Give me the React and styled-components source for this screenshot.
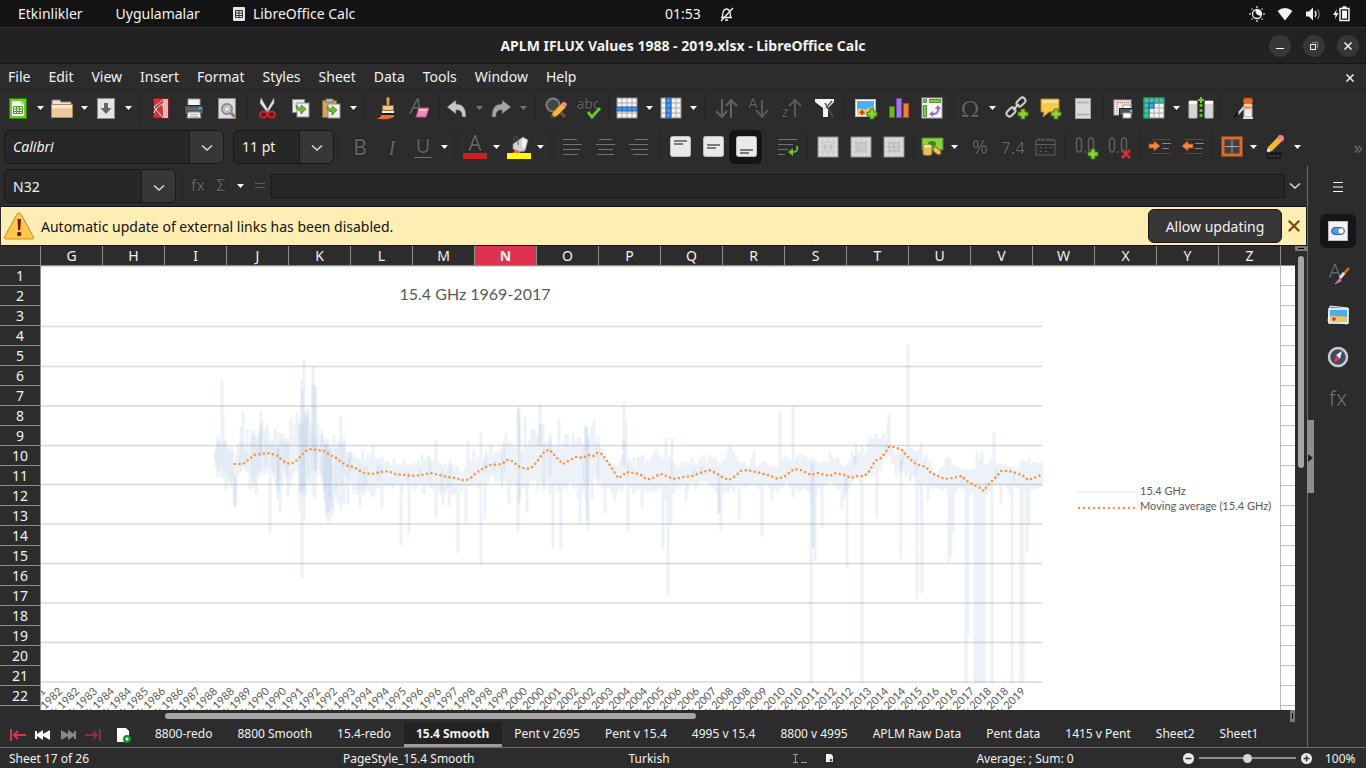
import { useState } from 'react'
import styled, { createGlobalStyle, css } from 'styled-components'

const GlobalStyle = createGlobalStyle`
  * { box-sizing: border-box; }
  body {
    margin: 0;
    background: #2c2c2c;
    color: #f2f2f2;
    font-family: 'Noto Sans', 'Open Sans', sans-serif;
    font-size: 14px;
  }
  button, input { font: inherit; color: inherit; }
  button { background: none; border: 0; padding: 0; }
  button svg { overflow: visible; }
`

/* ---------- icons, all drawn on a 24px board ---------- */

const Svg = ({ children, size = 24 }) => (
  <svg width={size} height={size} viewBox="0 0 24 24" fill="none" aria-hidden="true">{children}</svg>
)

const Plus = ({ x, y }) => (
  <path d={`M${x - 2} ${y - 5}h4v3h3v4h-3v3h-4v-3h-3v-4h3z`} fill="#8ad13a" stroke="#3c7a12" />
)

const Glyph = ({ children, size = 20, font = 'Noto Sans', italic, y = 19, x = 12 }) => (
  <text x={x} y={y} textAnchor="middle" fontSize={size} fontFamily={font} fontStyle={italic ? 'italic' : 'normal'} fill="#646464" stroke="#1f1f1f" strokeWidth="1.500" paintOrder="stroke">{children}</text>
)

const Table = ({ x = 2, y = 2, w = 20, h = 20, fill = '#f4f4f4', line = '#a9a9a9' }) => (
  <g>
    <rect x={x} y={y} width={w} height={h} fill={fill} stroke="#8b8b8b" />
    <path d={`M${x + 5} ${y}v${h}M${x + 10} ${y}v${h}M${x + 15} ${y}v${h}M${x} ${y + 5}h${w}M${x} ${y + 10}h${w}M${x} ${y + 15}h${w}`} stroke={line} />
  </g>
)

const icons = {
  newSheet: (
    <>
      <rect x="3.500" y="2.500" width="17" height="20" fill="#6ecb2b" stroke="#2f7f0b" />
      <path d="M6 5h9l3 3v12H6z" fill="#fff" />
      <path d="M15 5v3h3" stroke="#9ccf7c" />
      <path d="M7.500 10.500h9v7h-9zM7.500 13h9M7.500 15.500h9M10.500 10.500v7M13.500 10.500v7" stroke="#4c9a28" />
    </>
  ),
  open: (
    <>
      <path d="M2 4h8l1 2h10v12H2z" fill="#e4e4e4" stroke="#8a8a8a" />
      <path d="M1.500 8.500h21v13h-21z" fill="#ecca9c" stroke="#b08a58" />
      <path d="M2 9h20v3H2z" fill="#fbe9cf" />
    </>
  ),
  save: (
    <>
      <rect x="3.500" y="2.500" width="17" height="20" fill="#e4e4e4" stroke="#8d8d8d" />
      <path d="M10 7h4v5h3.500L12 18l-5.500-6H10z" fill="#62676b" />
    </>
  ),
  pdf: (
    <>
      <rect x="4.500" y="2.500" width="15" height="19.500" fill="#d5323a" stroke="#8d1a20" />
      <path d="M19 3h-3l-2 5 1 14h4z" fill="#d9bcbd" />
      <path d="M5 11l10-8M5 11l9 11M16 3l-2 5 1 14M5 17q2-6 9-9" stroke="#ececec" />
    </>
  ),
  print: (
    <>
      <rect x="6" y="3" width="12" height="8" fill="#f3f3f3" stroke="#999" />
      <rect x="2.500" y="9.500" width="19" height="9" rx="1" fill="#55585a" stroke="#242424" />
      <path d="M3 13h18" stroke="#777" />
      <rect x="17" y="11" width="2" height="2" fill="#33c5ff" />
      <path d="M6 16h12l1 6H5z" fill="#f3f3f3" stroke="#888" />
      <path d="M8 18.500h8M8 20.500h8" stroke="#b5b5b5" />
    </>
  ),
  preview: (
    <>
      <rect x="3.500" y="2.500" width="17" height="20" fill="#dcdcdc" stroke="#8d8d8d" />
      <circle cx="12" cy="13" r="5" fill="#c8d2da" stroke="#888" strokeWidth="2" />
      <circle cx="12" cy="13" r="2.500" fill="#e8eef2" stroke="#a5a5a5" />
      <path d="M16 17l4 4" stroke="#9a7b62" strokeWidth="3" />
    </>
  ),
  cut: (
    <>
      <path d="M5 2l7 12-1 2L4 7zM18 2l-7 12 1 2 6-9z" fill="#e8e8e8" stroke="#999" strokeWidth=".5" />
      <ellipse cx="7.500" cy="18.500" rx="3.500" ry="3" stroke="#d3202c" strokeWidth="2" />
      <ellipse cx="15.500" cy="18.500" rx="3.500" ry="3" stroke="#d3202c" strokeWidth="2" />
    </>
  ),
  copy: (
    <>
      <rect x="3.500" y="3.500" width="12" height="13" fill="#e8e8e8" stroke="#8d8d8d" />
      <rect x="8" y="7" width="12" height="14" fill="#f0f0f0" stroke="#8d8d8d" />
      <path d="M7 9c0 4 2 6 5 6v3l5-5-5-4v3c-2 0-3-1-5-3z" fill="#73b93a" stroke="#3f7d17" strokeWidth=".7" />
    </>
  ),
  paste: (
    <>
      <rect x="3.500" y="4.500" width="14" height="17" fill="#d5a15c" stroke="#8a6430" />
      <rect x="7" y="3" width="7" height="3" fill="#c9c9c9" stroke="#777" />
      <rect x="9" y="8" width="12" height="14" fill="#f0f0f0" stroke="#8d8d8d" />
      <path d="M8 10c0 4 2 6 5 6v3l5-5-5-4v3c-2 0-3-1-5-3z" fill="#73b93a" stroke="#3f7d17" strokeWidth=".7" />
    </>
  ),
  brush: (
    <>
      <path d="M12.500 2a1.800 1.800 0 0 1 3 0l-.5 8h-2z" fill="#e2b073" stroke="#8f6533" strokeWidth=".6" />
      <rect x="8.500" y="9.500" width="11" height="5" fill="#efc78c" stroke="#8f6533" strokeWidth=".8" />
      <path d="M8 15h12v2H8z" fill="#eee" />
      <path d="M8 18h12v3c-6 3-10 2-18 2 3-1 5-2 6-5z" fill="#e8702a" />
      <path d="M8 17h12v2H8z" fill="#1d1d1d" />
    </>
  ),
  clear: (
    <>
      <Glyph size={21} x={9} y={18} italic>A</Glyph>
      <path d="M12 12h10l-3 9H9z" fill="#f38bb5" stroke="#c04e80" />
      <path d="M12 13h9l-1 2h-9z" fill="#fbc0d7" />
    </>
  ),
  undo: <path d="M2 11l9-7v4c7 0 10 4 10 13h-4c0-5-1-7-6-7v4z" fill="#c8c8c8" stroke="#4d4d4d" strokeWidth=".6" />,
  redo: <path d="M22 11l-9-7v4c-7 0-10 4-10 13h4c0-5 1-7 6-7v4z" fill="#a5a5a5" stroke="#4d4d4d" strokeWidth=".6" />,
  find: (
    <>
      <circle cx="9" cy="9" r="6.500" fill="#454545" stroke="#808080" strokeWidth="2" />
      <path d="M14 14l7 7" stroke="#6e5548" strokeWidth="3" />
      <path d="M7 22l2-6 9-9 4 4-9 9z" fill="#f4b832" stroke="#986711" strokeWidth=".8" />
      <path d="M17 8l2-2h2l2 2v1l-2 2z" fill="#ee7fa0" />
      <path d="M7 22l1-3 2 2z" fill="#333" />
    </>
  ),
  spell: (
    <>
      <Glyph size={14} x={11} y={13}>abc</Glyph>
      <path d="M11 16l4 5 8-9" stroke="#67c52a" strokeWidth="3" />
    </>
  ),
  row: (
    <>
      <Table />
      <rect x="2" y="11" width="20" height="4" fill="#4b97e8" stroke="#1c5fb0" />
      <path d="M7 11v4M12 11v4M17 11v4" stroke="#1c5fb0" />
    </>
  ),
  column: (
    <>
      <Table />
      <rect x="7" y="2" width="5" height="20" fill="#4b97e8" stroke="#1c5fb0" />
      <path d="M7 7h5M7 12h5M7 17h5" stroke="#1c5fb0" />
    </>
  ),
  sort: <path d="M8 3v18M2 15l6 6 5-6M17 22V4M12 10l5-6 6 6" stroke="#626262" strokeWidth="2" />,
  sortAsc: (
    <>
      <Glyph size={14} x={6} y={12}>A</Glyph>
      <path d="M15 4v17M9 14l6 7 6-7" stroke="#585858" strokeWidth="2" />
    </>
  ),
  sortDesc: (
    <>
      <Glyph size={14} x={5} y={21}>z</Glyph>
      <path d="M15 21V4M9 10l6-6 6 6" stroke="#585858" strokeWidth="2" />
    </>
  ),
  filter: (
    <>
      <path d="M2 3h19v3l-6 6v9h-5v-9L2 6z" fill="#f3f3f3" />
      <path d="M12 7l8 14M19 5l-6 7" stroke="#555" strokeWidth="1.500" />
    </>
  ),
  image: (
    <>
      <rect x="1.500" y="3.500" width="20" height="17" fill="#fff" stroke="#bbb" />
      <rect x="3" y="5" width="17" height="14" fill="#4ab2ee" />
      <path d="M3 14c4-3 6 1 10-1s5-1 7 0v6H3z" fill="#f6cb72" />
      <path d="M8 14v5M5.500 16.500h5" stroke="#d43b1c" strokeWidth="2" />
      <Plus x={18} y={18} />
    </>
  ),
  chart: (
    <>
      <rect x="2.500" y="10.500" width="5" height="11" fill="#66bb2e" stroke="#3b8010" />
      <rect x="9.500" y="2.500" width="5" height="19" fill="#a577dc" stroke="#7443b4" />
      <rect x="16.500" y="7.500" width="5" height="14" fill="#f0813c" stroke="#b8501a" />
    </>
  ),
  pivot: (
    <>
      <rect x="2" y="2" width="20" height="20" fill="#f7f7f7" stroke="#aaa" />
      <path d="M3.500 3.500h3v3h-3zM9.500 3.500h11v3h-11zM3.500 9.500h3v11h-3z" fill="#7ec850" stroke="#4a9723" />
      <path d="M18 9l-3 4h2c0 3-1 4-4 4v-2l-4 3 4 3v-2c4 0 6-2 6-6h2z" fill="#9a6bd8" />
    </>
  ),
  omega: <Glyph size={23} y={21} font="DejaVu Serif">Ω</Glyph>,
  link: (
    <>
      <g stroke="#cfcfcf" strokeWidth="2">
        <rect x="13" y="1" width="6" height="10" rx="3" transform="rotate(45 16 6)" />
        <rect x="3" y="11" width="6" height="10" rx="3" transform="rotate(45 6 16)" />
        <path d="M8 14l6-6" />
      </g>
      <Plus x={18} y={18} />
    </>
  ),
  comment: (
    <>
      <path d="M3 3h18v13H11l-6 5 1-5H3z" fill="#f8ca4c" stroke="#b98a1b" />
      <path d="M4 4h16v3H4z" fill="#fde08a" />
      <Plus x={18} y={18} />
    </>
  ),
  headers: (
    <>
      <rect x="4.500" y="2.500" width="15" height="20" fill="#dadada" stroke="#a5a5a5" />
      <path d="M6 6.500h12M6 18.500h12" stroke="#b3b3b3" strokeWidth="2" />
    </>
  ),
  printArea: (
    <>
      <rect x="2" y="4" width="17" height="15" fill="#ececec" stroke="#aaa" />
      <path d="M4 6.500h13M5 6v12" stroke="#d66" strokeDasharray="1 1" />
      <rect x="11" y="9" width="8" height="4" fill="#fff" stroke="#999" />
      <rect x="7.500" y="12.500" width="14" height="7" fill="#505355" stroke="#222" />
      <rect x="11" y="17" width="8" height="5" fill="#fff" stroke="#999" />
      <rect x="18" y="14" width="2" height="2" fill="#33c5ff" />
    </>
  ),
  freeze: (
    <>
      <Table />
      <path d="M2 2h20v5H7v15H2z" fill="#45c2a0" stroke="#1e8d70" />
      <path d="M7 2v20M12 2v5M17 2v5M2 7h5M2 12h5M2 17h5" stroke="#1e8d70" />
      <rect x="7" y="7" width="5" height="5" fill="#4b97e8" stroke="#1c5fb0" />
    </>
  ),
  split: (
    <>
      <path d="M0 5h8v17H0zM16 5h8v17h-8z" fill="#d5d5d5" stroke="#bdbdbd" />
      <path d="M0 6.500h8M16 6.500h8" stroke="#fff" strokeWidth="3" />
      <path d="M12 8v15" stroke="#5cb828" strokeWidth="3" strokeDasharray="3 2" />
      <path d="M12 1v6M9 4h6" stroke="#6ccb32" strokeWidth="2" />
    </>
  ),
  draw: (
    <>
      <path d="M14 2h8l1 4-2 2h-6l-2-2z" fill="#e8692a" stroke="#a0410e" strokeWidth=".7" />
      <path d="M14 8h8v13h-8z" fill="#eee" stroke="#aaa" />
      <path d="M14 10h8v3h-8z" fill="#f19a63" />
      <path d="M13 21h10v2H13z" fill="#ddd" />
      <path d="M14 11l-6 7" stroke="#ddd" strokeWidth="2" />
      <path d="M9 16l-2 4-4 2 3-5z" fill="#111" />
    </>
  ),
  bold: <Glyph size={21} x={13} y={20}>B</Glyph>,
  italic: <Glyph size={22} y={20} font="Liberation Serif" italic>I</Glyph>,
  underline: (
    <>
      <Glyph size={20} x={13} y={18}>U</Glyph>
      <path d="M4 22.500h18" stroke="#707070" />
    </>
  ),
  fontColor: (
    <>
      <Glyph size={21} x={13} y={16}>A</Glyph>
      <path d="M1 18h24v6H1z" fill="#c9211e" />
    </>
  ),
  fill: (
    <>
      <path d="M7 9l10-7 5 3-3 11-7 1-5-3z" fill="#cfd2d5" stroke="#8a8a8a" strokeWidth=".7" />
      <path d="M16 3l5 2-2 9-3-2z" fill="#f3f3f3" />
      <path d="M12 10V3c-2-3-5-1-4 3" stroke="#5f5f5f" />
      <path d="M8 14l3 1 4 3H6c3-1 3-2 2-4z" fill="#ee6b2c" />
      <path d="M1 18h24v6H1z" fill="#ff0" />
    </>
  ),
  left: <path d="M2 4.500h14M2 9.500h19M2 14.500h17M2 19.500h15" stroke="#747474" />,
  center: <path d="M5 4.500h13M2 9.500h19M4 14.500h15M3 19.500h17" stroke="#747474" />,
  right: <path d="M8 4.500h13M2 9.500h19M4 14.500h17M6 19.500h15" stroke="#747474" />,
  top: (
    <>
      <rect x="2.500" y="1.500" width="20" height="20" rx="2" fill="#e9e9e9" stroke="#bdbdbd" />
      <path d="M6 6h13M6 9h9" stroke="#555" strokeWidth="1.500" />
    </>
  ),
  middle: (
    <>
      <rect x="2.500" y="1.500" width="20" height="20" rx="2" fill="#e9e9e9" stroke="#bdbdbd" />
      <path d="M6 10h13M6 13h9" stroke="#555" strokeWidth="1.500" />
    </>
  ),
  bottom: (
    <>
      <rect x="2.500" y="1.500" width="20" height="20" rx="2" fill="#e9e9e9" stroke="#bdbdbd" />
      <path d="M6 15h13M6 18h9" stroke="#555" strokeWidth="1.500" />
    </>
  ),
  wrap: (
    <>
      <path d="M3 4.500h19M3 9.500h15M3 14.500h10M3 19.500h7" stroke="#747474" />
      <path d="M23 11c1 4-1 7-5 7v3l-5-4 5-4v3c3 0 4-2 3-5z" fill="#73b93a" />
    </>
  ),
  merge: (
    <>
      <Table fill="#dcdcdc" line="#c6c6c6" />
      <path d="M5 8h14v8H5z" fill="#d4d4d4" />
      <path d="M10 9l-3 3 3 3zM14 9l3 3-3 3z" fill="#bcbcbc" />
    </>
  ),
  mergeCells: (
    <>
      <Table fill="#dcdcdc" line="#c6c6c6" />
      <path d="M7 8h10v8H7z" fill="#cacaca" stroke="#bbb" />
    </>
  ),
  unmerge: (
    <>
      <Table fill="#dcdcdc" line="#c6c6c6" />
      <path d="M7 8h10v8H7zM12 8v8M7 12h10" stroke="#b3b3b3" fill="#d2d2d2" />
    </>
  ),
  currency: (
    <>
      <path d="M2 3h21v12H2z" fill="#8cd04a" stroke="#4a9116" />
      <ellipse cx="12" cy="9" rx="4" ry="3" fill="#3e8a12" />
      <path d="M3 11c0-2 9-2 9 0v8c0 2-9 2-9 0z" fill="#e4bf62" stroke="#8f6c1e" />
      <ellipse cx="7.500" cy="11" rx="4" ry="1.500" fill="#f8e2a2" />
      <ellipse cx="17" cy="16" rx="4.500" ry="2.500" transform="rotate(40 17 16)" fill="#e9c56b" stroke="#8f6c1e" />
    </>
  ),
  percent: <Glyph size={19} x={13} y={19}>%</Glyph>,
  number: <Glyph size={17} x={13} y={19}>7.4</Glyph>,
  date: (
    <>
      <path d="M3 5h19v15H3zM3 9.500h19M6 3v3M10 3v3M15 3v3M19 3v3" stroke="#606060" />
      <path d="M7 12.500h12M7 16.500h9" stroke="#606060" strokeDasharray="2 3" />
    </>
  ),
  addDecimal: (
    <>
      <path d="M2.500 7q0-4 2.500-4t2.500 4v6q0 4-2.500 4t-2.500-4zM14.500 7q0-4 2.500-4t2.500 4v6q0 4-2.500 4t-2.500-4zM10 17h2" stroke="#606060" strokeWidth="1.500" />
      <Plus x={19} y={19} />
    </>
  ),
  delDecimal: (
    <>
      <path d="M2.500 7q0-4 2.500-4t2.500 4v6q0 4-2.500 4t-2.500-4zM14.500 7q0-4 2.500-4t2.500 4v6q0 4-2.500 4t-2.500-4zM10 17h2" stroke="#606060" strokeWidth="1.500" />
      <path d="M15 15l8 8M23 15l-8 8" stroke="#d22f35" strokeWidth="2.500" />
    </>
  ),
  indent: (
    <>
      <path d="M14 8.500h9M14 13.500h7" stroke="#888" />
      <path d="M4 4.500h18M4 18.500h18" stroke="#4a4a4a" />
      <path d="M1 9h5V6l6 5-6 5v-3H1z" fill="#f08a45" stroke="#b34c10" strokeWidth=".8" />
    </>
  ),
  outdent: (
    <>
      <path d="M14 8.500h9M14 13.500h7" stroke="#888" />
      <path d="M4 4.500h18M4 18.500h18" stroke="#4a4a4a" />
      <path d="M12 9H7V6l-6 5 6 5v-3h5z" fill="#f08a45" stroke="#b34c10" strokeWidth=".8" />
    </>
  ),
  border: (
    <>
      <rect x="4" y="3" width="18" height="17" fill="#404040" stroke="#e4682a" strokeWidth="3" />
      <path d="M13 5v13M6 11.500h14" stroke="#aaa" />
    </>
  ),
  pencil: (
    <>
      <path d="M3 20q8-3 16 0M4 23h14M8 18h10" stroke="#101010" strokeWidth="1.500" strokeDasharray="3 1" />
      <path d="M4 17l1-5L15 2l4 4L9 16z" fill="#f4b832" stroke="#986711" strokeWidth=".8" />
      <path d="M14 3l2-3h3l2 2v2l-2 3z" fill="#ee7fa0" />
      <path d="M4 17l1-4 3 3z" fill="#fff" />
    </>
  ),
  props: (
    <>
      <rect x="2.500" y="2.500" width="19" height="19" fill="#f3f3f3" stroke="#bbb" />
      <rect x="5.500" y="8.500" width="13" height="7" rx="3.500" fill="#4b97e8" stroke="#2669b8" />
      <circle cx="15" cy="12" r="3" fill="#fff" stroke="#999" />
    </>
  ),
  styles: (
    <>
      <Glyph size={20} x={9} y={17}>A</Glyph>
      <path d="M23 7l-8 9" stroke="#c9792d" strokeWidth="2.500" />
      <path d="M18 12l-4 5" stroke="#ddd" strokeWidth="3" />
      <path d="M14 17l-5 6 6-3z" fill="#e06cbc" stroke="#e06cbc" />
    </>
  ),
  gallery: (
    <>
      <path d="M4 3l18 2-1 16-19-3z" fill="#3f9cc7" stroke="#eee" />
      <rect x="3" y="6" width="19" height="14" fill="#49aeea" stroke="#fff" strokeWidth="1.500" />
      <path d="M4 14c5-3 6 1 11-1l6 1v5H4z" fill="#f3c263" />
      <path d="M8 14v4M6 16h4" stroke="#d43b1c" strokeWidth="1.500" />
    </>
  ),
  navigator: (
    <>
      <circle cx="12" cy="12" r="9" fill="#3d4c66" stroke="#cdcdcd" strokeWidth="2.500" />
      <path d="M16 6l-2 8-4-4z" fill="#f1f1f1" />
      <path d="M8 18l2-8 4 4z" fill="#e03a3a" />
    </>
  ),
  functions: <Glyph size={21} y={19}>fx</Glyph>,
}

const Icon = ({ name, size }) => <Svg size={size}>{icons[name]}</Svg>

const Chevron = () => (
  <svg width="12" height="8" viewBox="0 0 12 8" fill="none" aria-hidden="true"><path d="M1 1.500l5 4.500 5-4.500" stroke="#ddd" strokeWidth="1.500" /></svg>
)

const Cross = ({ size = 8, color = '#f2f2f2', width = 2 }) => (
  <svg width={size} height={size} viewBox="0 0 8 8" aria-hidden="true"><path d="M.5.5l7 7M7.500.5l-7 7" stroke={color} strokeWidth={width} /></svg>
)

/* ---------- desktop bar and window title ---------- */

const Screen = styled.div`
  display: flex;
  flex-direction: column;
  height: 100vh;
  overflow: hidden;
`

const TopBar = styled.header`
  display: grid;
  grid-template-columns: 1fr auto 1fr;
  align-items: center;
  height: 27px;
  flex: none;
  background: #131313;
`

const TopGroup = styled.div`
  display: flex;
  align-items: center;
  gap: 33px;
  padding: 0 18px;
`

const AppButton = styled.button`
  display: flex;
  align-items: center;
  gap: 8px;
`

const TrayGroup = styled.div`
  display: flex;
  align-items: center;
  justify-content: space-between;
  padding: 0 16px 0 16px;
`

const Tray = styled.div`
  display: flex;
  gap: 10px;
`

const TitleBar = styled.div`
  display: grid;
  grid-template-columns: 1fr auto 1fr;
  align-items: center;
  height: 37px;
  flex: none;
  background: #222;
  border-top: 1px solid #353535;
  border-bottom: 1px solid #171717;
`

const Title = styled.h1`
  margin: 0;
  font-size: 14px;
  font-weight: 700;
`

const WindowButtons = styled.div`
  display: flex;
  justify-content: flex-end;
  gap: 12px;
  padding-right: 7px;
`

const RoundButton = styled.button`
  display: flex;
  align-items: center;
  justify-content: center;
  width: 22px;
  height: 22px;
  border-radius: 50%;
  background: #373737;
`

const MenuBar = styled.nav`
  display: flex;
  align-items: center;
  height: 25px;
  flex: none;
  gap: 18px;
  padding: 0 12px 0 8px;
  border-bottom: 1px solid #272727;

  > :last-child { margin-left: auto; }
`

/* ---------- toolbars ---------- */

const Toolbar = styled.div`
  display: flex;
  align-items: center;
  height: ${({ $height }) => $height}px;
  flex: none;
  padding-left: 4px;
`

const ToolButton = styled.button`
  display: flex;
  align-items: center;
  justify-content: center;
  flex: none;
  width: ${({ $narrow }) => ($narrow ? 28 : 33)}px;
  height: 34px;
  border-radius: 6px;
  ${({ $active }) => $active && css`background: #141414;`}
`

const CaretButton = styled.button`
  display: flex;
  align-items: center;
  justify-content: center;
  flex: none;
  width: 16px;
  height: 34px;
  opacity: ${({ $dim }) => ($dim ? 0.35 : 1)};
`

const Separator = styled.span`
  flex: none;
  width: 2px;
  height: 32px;
  margin: 0 3px;
  background: #282828;
`

const Overflow = styled.button`
  margin-left: auto;
  width: 16px;
  color: #6c6c6c;
  font-size: 18px;
`

const Combo = styled.div`
  display: flex;
  flex: none;
  width: ${({ $width }) => $width}px;
  height: 34px;
  margin-right: ${({ $after }) => $after}px;
  border: 1px solid #181818;
  border-radius: 6px;
  background: #272727;
  overflow: hidden;

  input {
    flex: 1;
    min-width: 0;
    padding: 0 8px;
    border: 0;
    background: none;
    outline: 0;
    font-style: ${({ $italic }) => ($italic ? 'italic' : 'normal')};
  }

  button {
    width: 34px;
    border-left: 1px solid #181818;
    background: #373737;
  }
`

const FormulaBar = styled.div`
  display: flex;
  align-items: center;
  height: 40px;
  flex: none;
  padding: 0 2px 0 4px;
`

const FormulaInput = styled.input`
  flex: 1;
  min-width: 0;
  height: 24px;
  border: 1px solid #181818;
  background: #272727;
  outline: 0;
`

const FormulaButton = styled.button`
  display: flex;
  align-items: center;
  justify-content: center;
  width: ${({ $narrow }) => ($narrow ? 20 : 23)}px;
  height: 34px;
`

const Caret = ({ dim, label }) => (
  <CaretButton $dim={dim} aria-label={label}>
    <svg width="7" height="4" viewBox="0 0 7 4" aria-hidden="true"><path d="M0 0h7L3.500 4z" fill="#fff" /></svg>
  </CaretButton>
)

const standardTools = [
  'newSheet+', 'open+', 'save+', '|', 'pdf', 'print', 'preview', '|', 'cut', 'copy', 'paste+', '|',
  'brush', 'clear', '|', 'undo-', 'redo-', '|', 'find', 'spell', '|', 'row+', 'column+', '|',
  'sort', 'sortAsc', 'sortDesc', 'filter', '|', 'image', 'chart', 'pivot', '|', 'omega+', 'link', 'comment', 'headers', '|',
  'printArea', 'freeze+', 'split', '|', 'draw',
]

const formatTools = [
  '|', 'bold', 'italic', 'underline+', '|', 'fontColor+', 'fill+', '|', 'left', 'center', 'right', '|',
  'top', 'middle', 'bottom*', '|', 'wrap', '|', 'merge', 'mergeCells', 'unmerge', '|',
  'currency+', 'percent', 'number', 'date', '|', 'addDecimal', 'delDecimal', '|', 'indent', 'outdent', '|', 'border+', 'pencil+',
]

// "+" has a drop-down, "-" has a disabled one, "*" is pressed
function Tools({ items }) {
  return items.map((item, i) => {
    if (item === '|') return <Separator key={i} />
    const name = item.replace(/[+*-]$/, '')
    const drop = /[+-]$/.test(item)
    return [
      <ToolButton key={name} $narrow={drop} $active={item.endsWith('*')} aria-label={name}><Icon name={name} /></ToolButton>,
      drop && <Caret key={name + 'Menu'} dim={item.endsWith('-')} label={name + ' options'} />,
    ]
  })
}

/* ---------- work area ---------- */

const Body = styled.div`
  display: flex;
  flex: 1;
  min-height: 0;
  border-bottom: 1px solid #6e6e6e;
`

const Work = styled.main`
  display: flex;
  flex-direction: column;
  flex: 1;
  min-width: 0;
`

const InfoBar = styled.div`
  display: flex;
  align-items: center;
  height: 40px;
  flex: none;
  gap: 6px;
  margin-left: 1px;
  padding: 0 6px 0 2px;
  border: 1px solid #151515;
  border-left: 0;
  background: #ffeeb3;
  color: #111;

  p { flex: 1; margin: 0; }
`

const AllowButton = styled.button`
  height: 34px;
  width: 134px;
  border: 1px solid #181818;
  border-radius: 6px;
  background: #373737;
  color: #f2f2f2;
`

const SheetArea = styled.div`
  display: flex;
  flex: 1;
  min-height: 0;
`

const SheetView = styled.div`
  position: relative;
  flex: 1;
  min-width: 0;
  overflow: hidden;
`

const Cells = styled.table`
  width: 100%;
  table-layout: fixed;
  border-spacing: 0;

  th, td { height: 20px; padding: 0; line-height: 18px; }
  th {
    background: #2c2c2c;
    border-right: 1px solid #8e8e8e;
    border-bottom: 1px solid #8e8e8e;
    font-weight: 400;
  }
  td {
    background: #fff;
    border-right: 1px solid #c0c0c0;
    border-bottom: 1px solid #c0c0c0;
  }
  th.current { background: #dc3450; font-weight: 700; }
  th:last-child, td:last-child { border-right: 0; }
`

// the chart object floats over the cells
const ChartFrame = styled.div`
  position: absolute;
  left: 41px;
  top: 20px;
  width: 1240px;
  height: 100%;
  background: #fff;
  border-right: 1px solid #b9b9b9;
`

const VScroll = styled.div`
  display: flex;
  flex-direction: column;
  align-items: center;
  gap: 5px;
  width: 12px;
`

const VSplit = styled.span`
  width: 100%;
  height: 5px;
  border: solid #7a7a7a;
  border-width: 2px 3px;
  background: #000;
`

const VThumb = styled.span`
  width: 6px;
  height: 212px;
  border-radius: 3px;
  background: #a6a6a6;
`

const HScroll = styled.div`
  display: flex;
  align-items: center;
  justify-content: space-between;
  height: 12px;
  flex: none;
  padding: 0 12px 0 165px;
`

const HThumb = styled.span`
  width: 531px;
  height: 6px;
  border-radius: 3px;
  background: #a6a6a6;
`

const HSplit = styled.span`
  width: 5px;
  height: 12px;
  border: solid #7a7a7a;
  border-width: 3px 2px;
  background: #000;
`

const TabStrip = styled.div`
  display: flex;
  height: 25px;
  flex: none;
`

const TabNav = styled.div`
  display: flex;
  align-items: center;
  gap: 9px;
  width: 143px;
  padding-left: 10px;
  flex: none;

  button { display: flex; }
  button:last-child { margin-left: 6px; }
`

const Tab = styled.button`
  padding: 0 13px 0 12px;
  font-size: 12px;
  white-space: nowrap;
  border-bottom: 3px solid ${({ $active }) => ($active ? '#9a9a9a' : 'transparent')};
  background: ${({ $active }) => ($active ? '#222' : 'none')};
  font-weight: ${({ $active }) => ($active ? 700 : 400)};
`

const Sidebar = styled.aside`
  position: relative;
  display: flex;
  flex-direction: column;
  align-items: center;
  gap: 8px;
  width: 59px;
  padding: 4px 0 0 2px;
  border-left: 1px solid #6e6e6e;
`

const SideButton = styled.button`
  display: flex;
  align-items: center;
  justify-content: center;
  width: 36px;
  height: 34px;
  border-radius: 6px;
  background: ${({ $active }) => ($active ? '#161616' : 'none')};

  &:first-child { margin-bottom: 2px; }
`

const SideHandle = styled.button`
  position: absolute;
  left: -1px;
  top: 254px;
  width: 7px;
  height: 73px;
  background: #8e8e8e;
`

const StatusBar = styled.footer`
  display: grid;
  grid-template-columns: 176px 158px 180px 1fr 32px 60px 298px 192px;
  align-items: center;
  height: 20px;
  flex: none;
  font-size: 12px;
`

const StatusCell = styled.span`
  display: flex;
  justify-content: ${({ $center }) => ($center ? 'center' : 'flex-start')};
  padding-left: ${({ $center }) => ($center ? 0 : 9)}px;
`

const ZoomBox = styled.div`
  display: flex;
  align-items: center;
  gap: 5px;
  padding-left: 9px;

  button { display: flex; }
  output { margin-left: 8px; }
`

const ZoomRange = styled.input`
  appearance: none;
  width: 97px;
  height: 12px;
  margin: 0;
  background: linear-gradient(#8e8e8e, #8e8e8e) center / 100% 2px no-repeat;

  &::-webkit-slider-thumb {
    appearance: none;
    width: 9px;
    height: 9px;
    border-radius: 50%;
    background: #d6d6d6;
  }
`

/* ---------- chart ---------- */

const gridLines = [60.5, 100.5, 140, 179.5, 218.5, 258, 297.5, 337, 376.5, 416]

// x, top and bottom of the dense part of the signal
const band = [
  [216, 450, 466], [221, 440, 472], [225, 444, 478], [231, 450, 483], [235, 470, 492], [239, 453, 470], [246, 448, 465],
  [254, 440, 484], [262, 434, 470], [270, 442, 460], [277, 444, 486], [284, 444, 470], [289, 446, 488], [297, 430, 462],
  [303, 420, 492], [310, 424, 480], [318, 438, 460], [325, 442, 492], [332, 446, 502], [342, 450, 478], [350, 456, 482],
  [362, 462, 490], [380, 463, 486], [395, 467, 482], [410, 468, 482], [425, 464, 483], [435, 466, 488], [450, 470, 492],
  [460, 476, 488], [470, 466, 482], [480, 462, 478], [492, 457, 474], [508, 448, 478], [520, 452, 484], [530, 448, 480],
  [540, 436, 472], [548, 446, 480], [560, 450, 484], [575, 446, 480], [585, 444, 482], [598, 444, 476], [606, 462, 486],
  [616, 468, 488], [625, 458, 480], [634, 466, 488], [645, 468, 484], [656, 462, 486], [668, 466, 488], [680, 468, 484],
  [695, 466, 480], [708, 464, 480], [720, 468, 494], [730, 456, 484], [745, 468, 484], [762, 468, 482], [775, 472, 486],
  [785, 459, 480], [797, 464, 484], [811, 462, 490], [822, 466, 484], [832, 462, 480], [845, 468, 490], [856, 456, 474],
  [866, 456, 474], [872, 444, 468], [884, 440, 458], [890, 444, 454], [896, 458, 468], [904, 450, 468], [914, 452, 474],
  [924, 462, 482], [936, 476, 486], [948, 466, 486], [958, 470, 482], [970, 472, 492], [985, 466, 494], [992, 464, 484],
  [1002, 466, 482], [1015, 470, 486], [1024, 466, 486], [1032, 466, 488], [1042, 464, 485],
]

// x, top, bottom
const spikes = [
  [222, 381, 460], [223, 413, 470], [235, 470, 506], [241, 428, 460], [243, 413, 450], [247, 430, 460], [256, 450, 493],
  [261, 412, 460], [262, 420, 470], [267, 426, 455], [270, 450, 533], [275, 430, 470], [278, 450, 499], [280, 433, 511],
  [284, 435, 470], [288, 450, 496], [291, 419, 460], [295, 426, 460], [297, 413, 460], [300, 422, 509], [302, 380, 577],
  [304, 361, 519], [308, 409, 450], [313, 368, 494], [315, 386, 498], [318, 428, 460], [326, 440, 514], [328, 441, 521],
  [330, 450, 520], [333, 447, 514], [341, 417, 509], [344, 445, 502], [348, 460, 503], [360, 470, 505], [363, 450, 480],
  [373, 446, 480], [382, 460, 507], [401, 470, 544], [409, 470, 533], [422, 456, 480], [423, 470, 493], [436, 441, 517],
  [443, 470, 504], [449, 470, 505], [458, 469, 552], [466, 470, 523], [468, 442, 480], [474, 451, 470], [481, 433, 564],
  [485, 460, 518], [491, 446, 470], [504, 444, 470], [509, 442, 503], [518, 450, 532], [519, 408, 500], [525, 417, 470],
  [527, 450, 511], [534, 431, 470], [540, 405, 480], [543, 426, 470], [550, 450, 493], [553, 460, 547], [559, 420, 470],
  [561, 460, 549], [565, 437, 470], [573, 434, 470], [580, 450, 522], [586, 426, 500], [588, 450, 529], [594, 421, 460],
  [598, 437, 470], [605, 460, 512], [615, 470, 500], [624, 403, 450], [626, 423, 470], [628, 460, 530], [642, 470, 507],
  [643, 456, 480], [656, 450, 490], [663, 460, 548], [666, 439, 500], [668, 470, 594], [671, 460, 523], [672, 439, 480],
  [686, 470, 499], [700, 459, 480], [719, 470, 513], [721, 470, 529], [729, 454, 490], [733, 454, 480], [739, 470, 518],
  [754, 452, 480], [762, 466, 535], [772, 470, 500], [780, 413, 480], [793, 407, 496], [811, 460, 682], [813, 462, 547],
  [815, 460, 560], [822, 470, 527], [830, 453, 480], [842, 470, 508], [847, 470, 566], [856, 444, 470], [862, 446, 682],
  [870, 438, 460], [877, 444, 517], [888, 426, 450], [889, 415, 450], [901, 455, 558], [908, 345, 470], [917, 460, 598],
  [919, 454, 480], [921, 445, 518], [922, 480, 592], [928, 470, 499], [947, 459, 480], [949, 470, 561], [951, 470, 555],
  [953, 470, 530], [966, 470, 682], [968, 480, 634], [975, 470, 682], [977, 452, 682], [980, 460, 682], [982, 453, 682],
  [984, 470, 682], [992, 460, 682], [994, 433, 480], [1001, 470, 502], [1010, 470, 493], [1012, 470, 682], [1021, 462, 682],
  [1023, 462, 682], [1027, 470, 551], [1029, 460, 523],
]

const average = [
  [235, 464], [243, 464], [247, 461], [254, 455], [262, 454], [267, 453], [272, 454], [278, 456], [282, 460], [286, 463],
  [290, 464], [295, 462], [301, 456], [306, 451], [311, 449], [318, 450], [324, 451], [330, 455], [335, 457], [341, 462],
  [348, 466], [354, 467], [360, 471], [364, 473], [372, 474], [380, 472], [388, 471], [395, 474], [405, 475], [415, 476],
  [422, 475], [430, 473], [440, 475], [447, 477], [455, 478], [461, 480], [467, 480], [472, 477], [476, 473], [482, 469],
  [490, 465], [502, 464], [507, 460], [512, 461], [518, 466], [526, 469], [531, 468], [536, 463], [541, 456], [545, 451],
  [550, 450], [556, 457], [563, 464], [570, 460], [576, 457], [583, 458], [588, 455], [594, 456], [597, 453], [602, 454],
  [609, 464], [613, 470], [618, 478], [622, 476], [626, 472], [635, 473], [641, 475], [646, 479], [651, 479], [658, 475],
  [663, 474], [668, 477], [675, 479], [683, 477], [692, 476], [700, 473], [709, 470], [716, 473], [722, 477], [729, 480],
  [734, 477], [741, 471], [747, 470], [756, 472], [764, 474], [771, 476], [778, 479], [785, 476], [794, 469], [801, 470],
  [811, 475], [818, 473], [825, 475], [830, 476], [836, 473], [844, 475], [851, 478], [857, 476], [864, 476], [868, 473],
  [871, 468], [875, 461], [881, 458], [885, 453], [889, 447], [894, 447], [902, 450], [908, 457], [914, 463], [919, 465],
  [926, 467], [931, 473], [938, 476], [945, 479], [952, 478], [962, 476], [968, 482], [974, 485], [980, 488], [984, 491],
  [987, 486], [993, 480], [998, 475], [1001, 471], [1009, 471], [1016, 473], [1022, 475], [1028, 480], [1034, 478], [1041, 475],
]

// every eighth month gets a label, so each second year shows twice
const years = Array.from({ length: 58 }, (_, i) => 1980 + Math.floor((i + 2) / 3) * 2 + (i % 3 === 0 ? 1 : 0))

function bandAt(x) {
  const i = Math.max(1, band.findIndex((p) => p[0] >= x))
  const [a, b] = [band[i - 1], band[i]]
  const t = (x - a[0]) / (b[0] - a[0])
  return [a[1] + (b[1] - a[1]) * t, a[2] + (b[2] - a[2]) * t]
}

const noise = (n) => {
  const v = Math.sin(n * 127.1) * 43758.5
  return v - Math.floor(v)
}

const line = (x, top, bottom) => `M${x} ${top}V${bottom}`

const filler = []
for (let x = 216; x <= 1042; x += 2) {
  const [top, bottom] = bandAt(x)
  const wild = x < 345 ? 14 : x < 500 ? 9 : x < 600 ? 18 : x < 960 ? 9 : 3
  filler.push([x, Math.round(top - noise(x) ** 3 * wild), Math.round(bottom + noise(x + 9) ** 3 * wild)])
}
const signal = [...filler, ...spikes].map((s) => line(...s)).join('')
const heavy = filler
  .filter(([x]) => noise(x + 3) > (x < 345 ? 0.5 : x < 600 ? 0.82 : 0.95))
  .map(([x, t, b]) => line(x, t + 5, b - 6))
  .join('')
const heaviest = [
  [235, 476, 505], [261, 425, 455], [278, 450, 490], [300, 425, 492], [302, 390, 490], [304, 412, 494], [306, 414, 450],
  [313, 386, 450], [315, 388, 470], [325, 446, 500], [327, 445, 512], [329, 450, 511], [331, 460, 505], [350, 453, 470],
  [518, 410, 440], [519, 420, 502], [540, 425, 445], [587, 430, 520], [586, 428, 450], [624, 442, 465], [719, 475, 512],
  [812, 464, 500], [813, 465, 546], [846, 475, 492], [855, 457, 464], [901, 460, 472],
].map((s) => line(...s)).join('')

const ChartText = styled.text`
  font-family: Lato, sans-serif;
  font-size: ${({ $size }) => $size}px;
  fill: #595959;
`

function FluxChart() {
  return (
    <svg width="1239" height="444" role="img" aria-label="15.4 GHz 1969-2017">
      <path d="M0 0.500h1239" stroke="#d9d9d9" />
      {gridLines.map((y) => <path key={y} d={`M0 ${y}H1001`} stroke="#d9d9d9" strokeWidth="1.400" />)}
      <ChartText x="434" y="34" $size={16} textAnchor="middle">15.4 GHz 1969-2017</ChartText>
      <g transform="translate(-41 -266)" fill="none" strokeLinecap="round" strokeWidth="3">
        <path d={signal} stroke="#4a7ebb" strokeOpacity="0.1" />
        <path d={heavy} stroke="#4a7ebb" strokeOpacity="0.07" />
        <path d={heaviest} stroke="#4a7ebb" strokeOpacity="0.1" />
        <polyline points={average.join(' ')} stroke="#f79646" strokeWidth="2.600" strokeDasharray="0 4.600" />
      </g>
      {years.map((year, i) => (
        <ChartText key={i} $size={11} textAnchor="end" transform={`translate(${Math.round(5 + i * 17.2)} 426) rotate(-45)`}>{`k.${year}`}</ChartText>
      ))}
      <path d="M1036 226h61" stroke="#edf2f9" strokeWidth="2" />
      <path d="M1038 242h58" stroke="#f79646" strokeWidth="2.600" strokeLinecap="round" strokeDasharray="0 5" />
      <ChartText x="1099" y="229" $size={11}>15.4 GHz</ChartText>
      <ChartText x="1099" y="244" $size={11}>Moving average (15.4 GHz)</ChartText>
    </svg>
  )
}

/* ---------- parts ---------- */

const letters = 'GHIJKLMNOPQRSTUVWXYZ'.split('')
const rows = Array.from({ length: 23 }, (_, i) => i + 1)

function Sheet() {
  return (
    <SheetView>
      <Cells>
        <colgroup>
          <col width="41" />
          {letters.map((l) => <col key={l} width="62" />)}
          <col />
        </colgroup>
        <thead>
          <tr>
            <th />
            {letters.map((l) => <th key={l} className={l === 'N' ? 'current' : undefined}>{l}</th>)}
            <th />
          </tr>
        </thead>
        <tbody>
          {rows.map((r) => (
            <tr key={r}>
              <th>{r < 23 ? r : ''}</th>
              {letters.map((l) => <td key={l} />)}
              <td />
            </tr>
          ))}
        </tbody>
      </Cells>
      <ChartFrame><FluxChart /></ChartFrame>
    </SheetView>
  )
}

const menus = ['File', 'Edit', 'View', 'Insert', 'Format', 'Styles', 'Sheet', 'Data', 'Tools', 'Window', 'Help']
const tabs = [
  '8800-redo', '8800 Smooth', '15.4-redo', '15.4 Smooth', 'Pent v 2695', 'Pent v 15.4', '4995 v 15.4',
  '8800 v 4995', 'APLM Raw Data', 'Pent data', '1415 v Pent', 'Sheet2', 'Sheet1',
]

function SheetTabs() {
  const [current, setCurrent] = useState('15.4 Smooth')
  return (
    <TabStrip>
      <TabNav>
        <button aria-label="First sheet"><svg width="16" height="12" fill="none"><path d="M1 0v12M3 6h13M8 2L4 6l4 4" stroke="#dc3450" strokeWidth="2" /></svg></button>
        <button aria-label="Previous sheet"><svg width="16" height="12"><path d="M0 2h2v3l6-4v4l7-4v10L8 7v4L2 7v3H0z" fill="#fff" /></svg></button>
        <button aria-label="Next sheet"><svg width="16" height="12"><path d="M16 2h-2v3L8 1v4L1 1v10l7-4v4l6-4v3h2z" fill="#8a8a8a" /></svg></button>
        <button aria-label="Last sheet"><svg width="16" height="12" fill="none"><path d="M15 0v12M0 6h13M8 2l4 4-4 4" stroke="#8b3040" strokeWidth="2" /></svg></button>
        <button aria-label="Add sheet">
          <svg width="15" height="16"><path d="M1 1h9l3 3v11H1z" fill="#fff" /><circle cx="11" cy="12" r="4" fill="#178a2c" /><path d="M11 10v4M9 12h4" stroke="#fff" /></svg>
        </button>
      </TabNav>
      {tabs.map((t) => <Tab key={t} $active={t === current} onClick={() => setCurrent(t)}>{t}</Tab>)}
    </TabStrip>
  )
}

const ZoomMark = ({ plus }) => (
  <svg width="11" height="11" aria-hidden="true"><circle cx="5.500" cy="5.500" r="5.500" fill="#ececec" /><path d={plus ? 'M2.500 5.500h6M5.500 2.500v6' : 'M2.500 5.500h6'} stroke="#333" strokeWidth="1.500" /></svg>
)

export default function App() {
  const [zoom, setZoom] = useState(50)
  return (
    <Screen>
      <GlobalStyle />
      <TopBar>
        <TopGroup>
          <AppButton>Etkinlikler</AppButton>
          <AppButton>Uygulamalar</AppButton>
          <AppButton>
            <svg width="12" height="14"><rect width="12" height="14" rx="1" fill="#e6e6e6" /><path d="M2.500 3.500h7v7h-7zM2.500 6h7M2.500 8.500h7M6 3v8" stroke="#333" fill="none" /></svg>
            LibreOffice Calc
          </AppButton>
        </TopGroup>
        <time>01:53</time>
        <TrayGroup>
          <svg width="18" height="16" viewBox="0 0 18 16" fill="none" stroke="#f2f2f2" aria-label="Muted">
            <path d="M4 11.500h11M5.500 11c0-5 .5-8 4-8s4 3 4 8M8 14h3M16 2L4 15" strokeWidth="1.300" />
          </svg>
          <Tray>
            <svg width="18" height="18" viewBox="0 0 18 18" fill="none">
              <circle cx="9" cy="9" r="4.500" stroke="#f2f2f2" strokeWidth="1.300" /><path d="M8 5a4 4 0 0 0 5 5 4 4 0 0 0-5-5z" fill="#f2f2f2" />
              <path d="M8 5.500a4 4 0 0 0 5 4.500" stroke="#f2f2f2" />
              <path d="M9 1v2M9 15v2M1 9h2M15 9h2M3.500 3.500l1 1M13.500 13.500l1 1M3.500 14.500l1-1M13.500 4.500l1-1" stroke="#bbb" strokeWidth="1.500" />
            </svg>
            <svg width="18" height="18" viewBox="0 0 18 18"><path d="M1.500 6q7.500-6 15 0L9 15.500z" fill="#f2f2f2" /></svg>
            <svg width="18" height="18" viewBox="0 0 18 18" fill="none"><path d="M2 6.500h3l4-4v13l-4-4H2z" fill="#f2f2f2" /><path d="M11 6q2 3 0 6" stroke="#ddd" strokeWidth="1.500" /><path d="M13.500 4q3.500 5 0 10" stroke="#777" strokeWidth="1.300" /></svg>
            <svg width="18" height="18" viewBox="0 0 18 18"><path d="M5 4L1 10h2.500L3 14l3.500-6H4z" fill="#f2f2f2" /><path d="M8 3.500h9v12H8zM10.500 2h4" stroke="#f2f2f2" strokeWidth="1.500" fill="none" /><path d="M10 5.500h5v8h-5z" fill="#f2f2f2" /></svg>
          </Tray>
        </TrayGroup>
      </TopBar>
      <TitleBar>
        <span />
        <Title>APLM IFLUX Values 1988 - 2019.xlsx - LibreOffice Calc</Title>
        <WindowButtons>
          <RoundButton aria-label="Minimize"><svg width="8" height="8"><path d="M0 6.500h8" stroke="#fff" /></svg></RoundButton>
          <RoundButton aria-label="Restore"><svg width="8" height="8" fill="none"><path d="M.5 2.500h5v5h-5z" stroke="#fff" /><path d="M2 .5h5.500V6" stroke="#888" /></svg></RoundButton>
          <RoundButton aria-label="Close"><Cross width={1.5} /></RoundButton>
        </WindowButtons>
      </TitleBar>
      <MenuBar>
        {menus.map((m) => <button key={m}>{m}</button>)}
        <button aria-label="Close document"><Cross width={1.5} /></button>
      </MenuBar>
      <Toolbar $height={38}><Tools items={standardTools} /></Toolbar>
      <Toolbar $height={39}>
        <Combo $width={220} $after={9} $italic>
          <input aria-label="Font name" defaultValue="Calibri" />
          <button aria-label="Fonts"><Chevron /></button>
        </Combo>
        <Combo $width={101} $after={0}>
          <input aria-label="Font size" defaultValue="11 pt" />
          <button aria-label="Sizes"><Chevron /></button>
        </Combo>
        <Tools items={formatTools} />
        <Overflow aria-label="More">»</Overflow>
      </Toolbar>
      <Body>
        <Work>
          <FormulaBar>
            <Combo $width={172} $after={2}>
              <input aria-label="Name box" defaultValue="N32" />
              <button aria-label="Named cells"><Chevron /></button>
            </Combo>
            <Separator />
            <FormulaButton aria-label="Function wizard"><Svg size={20}><Glyph size={19} y={18}>fx</Glyph></Svg></FormulaButton>
            <FormulaButton aria-label="Sum"><Svg size={20}><Glyph size={20} y={18}>Σ</Glyph></Svg></FormulaButton>
            <Caret label="Select function" />
            <FormulaButton aria-label="Formula"><svg width="10" height="8"><path d="M0 1.500h10M0 5.500h10" stroke="#5c5c5c" /></svg></FormulaButton>
            <FormulaInput aria-label="Input line" />
            <FormulaButton $narrow aria-label="Expand formula bar"><Chevron /></FormulaButton>
          </FormulaBar>
          <InfoBar>
            <svg width="32" height="30" viewBox="0 0 32 30"><path d="M16 2q1.500 0 2.500 2l12 22q.5 2-1.500 2H3q-2 0-1.500-2l12-22q1-2 2.500-2z" fill="#fbc94a" stroke="#c58a2e" /><path d="M14.500 8h3.500l-.8 11h-2z" fill="#7c0d0d" /><circle cx="16.200" cy="23" r="2.200" fill="#7c0d0d" /></svg>
            <p>Automatic update of external links has been disabled.</p>
            <AllowButton>Allow updating</AllowButton>
            <button aria-label="Close infobar"><Cross size={12} color="#7a4b0c" width={1.5} /></button>
          </InfoBar>
          <SheetArea>
            <Sheet />
            <VScroll><VSplit /><VThumb /></VScroll>
          </SheetArea>
          <HScroll><HThumb /><HSplit /></HScroll>
          <SheetTabs />
        </Work>
        <Sidebar>
          <SideButton aria-label="Sidebar settings"><svg width="10" height="10"><path d="M0 .5h10M0 5h10M0 9.500h10" stroke="#fff" /></svg></SideButton>
          <SideButton $active aria-label="Properties"><Icon name="props" /></SideButton>
          <SideButton aria-label="Styles"><Icon name="styles" /></SideButton>
          <SideButton aria-label="Gallery"><Icon name="gallery" /></SideButton>
          <SideButton aria-label="Navigator"><Icon name="navigator" /></SideButton>
          <SideButton aria-label="Functions"><Icon name="functions" /></SideButton>
          <SideHandle aria-label="Collapse sidebar"><svg width="5" height="8"><path d="M0 0l5 4-5 4z" fill="#222" /></svg></SideHandle>
        </Sidebar>
      </Body>
      <StatusBar>
        <StatusCell>Sheet 17 of 26</StatusCell>
        <span />
        <StatusCell>PageStyle_15.4 Smooth</StatusCell>
        <StatusCell $center>Turkish</StatusCell>
        <StatusCell><svg width="14" height="9" fill="none"><path d="M0 .5h5M0 8.500h5M2.500 0v9M8 8.500h6" stroke="#999" /></svg></StatusCell>
        <StatusCell><svg width="10" height="9"><path d="M1 0h5l2 2v6H1z" fill="#f2f2f2" /><circle cx="6" cy="6" r="1.500" fill="#555" /></svg></StatusCell>
        <StatusCell $center>Average: ; Sum: 0</StatusCell>
        <ZoomBox>
          <button aria-label="Zoom out"><ZoomMark /></button>
          <ZoomRange type="range" aria-label="Zoom" value={zoom} onChange={(e) => setZoom(e.target.value)} />
          <button aria-label="Zoom in"><ZoomMark plus /></button>
          <output>100%</output>
        </ZoomBox>
      </StatusBar>
    </Screen>
  )
}
